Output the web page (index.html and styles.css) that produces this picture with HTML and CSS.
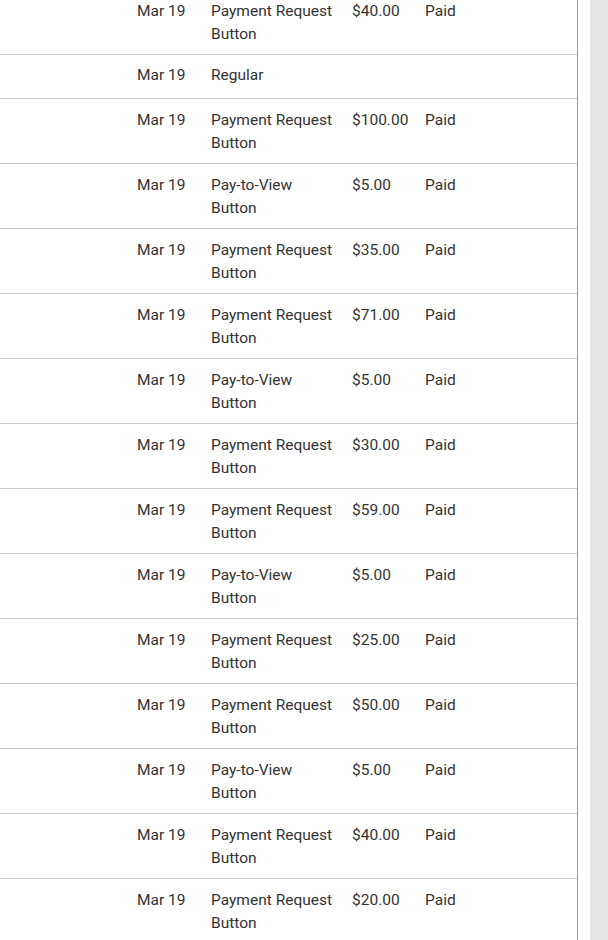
FILE: index.html
```html
<!DOCTYPE html>
<html>
<head>
<meta charset="utf-8">
<link rel="stylesheet" href="styles.css">
</head>
<body>
<div class="page">
  <div class="panel">
    <div class="table">
      <div class="row"><div></div><div>Mar 19</div><div>Payment Request Button</div><div>$40.00</div><div>Paid</div></div>
      <div class="row single"><div></div><div>Mar 19</div><div>Regular</div><div></div><div></div></div>
      <div class="row"><div></div><div>Mar 19</div><div>Payment Request Button</div><div>$100.00</div><div>Paid</div></div>
      <div class="row"><div></div><div>Mar 19</div><div>Pay-to-View Button</div><div>$5.00</div><div>Paid</div></div>
      <div class="row"><div></div><div>Mar 19</div><div>Payment Request Button</div><div>$35.00</div><div>Paid</div></div>
      <div class="row"><div></div><div>Mar 19</div><div>Payment Request Button</div><div>$71.00</div><div>Paid</div></div>
      <div class="row"><div></div><div>Mar 19</div><div>Pay-to-View Button</div><div>$5.00</div><div>Paid</div></div>
      <div class="row"><div></div><div>Mar 19</div><div>Payment Request Button</div><div>$30.00</div><div>Paid</div></div>
      <div class="row"><div></div><div>Mar 19</div><div>Payment Request Button</div><div>$59.00</div><div>Paid</div></div>
      <div class="row"><div></div><div>Mar 19</div><div>Pay-to-View Button</div><div>$5.00</div><div>Paid</div></div>
      <div class="row"><div></div><div>Mar 19</div><div>Payment Request Button</div><div>$25.00</div><div>Paid</div></div>
      <div class="row"><div></div><div>Mar 19</div><div>Payment Request Button</div><div>$50.00</div><div>Paid</div></div>
      <div class="row"><div></div><div>Mar 19</div><div>Pay-to-View Button</div><div>$5.00</div><div>Paid</div></div>
      <div class="row"><div></div><div>Mar 19</div><div>Payment Request Button</div><div>$40.00</div><div>Paid</div></div>
      <div class="row"><div></div><div>Mar 19</div><div>Payment Request Button</div><div>$20.00</div><div>Paid</div></div>
    </div>
  </div>
  <div class="gap"></div>
  <div class="track"></div>
</div>
</body>
</html>
```
FILE: styles.css
```css
html, body {
  margin: 0;
  padding: 0;
  background: #fff;
  height: 100%;
  overflow: hidden;
}
.page {
  display: flex;
  height: 940px;
  font-family: Roboto, "Liberation Sans", sans-serif;
  font-size: 15.5px;
  line-height: 23px;
  color: #333;
}
.panel {
  width: 577px;
  border-right: 1px solid #999;
  overflow: hidden;
}
.gap {
  width: 12px;
}
.track {
  flex: 1;
  background: #e5e5e5;
}
.table {
  margin-top: -10px;
}
.row {
  display: grid;
  grid-template-columns: 137px 74px 141px 73px 1fr;
  border-bottom: 1px solid #ccc;
}
.row > div {
  padding: 10px 10px 8px 0;
}
.row > div:nth-child(3) {
  padding-right: 16px;
}
.row.single > div {
  padding-top: 9px;
  padding-bottom: 11px;
}
```
